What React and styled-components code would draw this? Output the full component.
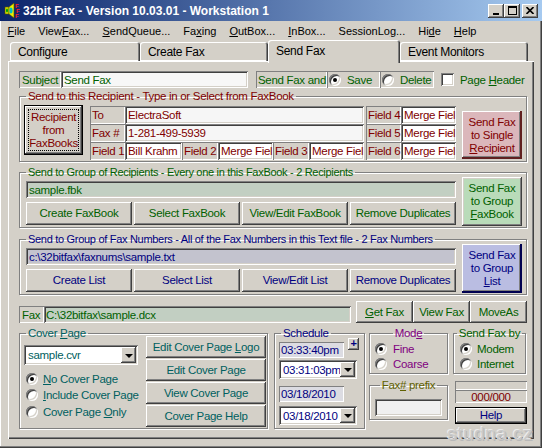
import React from 'react';
import styled, { createGlobalStyle } from 'styled-components';

const RAISED = 'inset -1px -1px #404040, inset 1px 1px #fff, inset -2px -2px #808080, inset 2px 2px #d4d0c8';
const SUNKEN = 'inset 1px 1px #808080, inset -1px -1px #fff, inset 2px 2px #404040, inset -2px -2px #d4d0c8';
const THIN = 'inset 1px 1px #808080, inset -1px -1px #fff';

const GREEN = '#006000';
const RED = '#800000';
const NAVY = '#000080';
const TEAL = '#006060';
const PURPLE = '#800080';
const OLIVE = '#606000';

const GlobalStyle = createGlobalStyle`
  html, body { margin: 0; padding: 0; background: #d4d0c8; overflow: hidden; }
  body {
    font-family: "Liberation Sans", Arial, sans-serif;
    font-size: 11.5px;
    letter-spacing: -0.3px;
  }
`;

const Window = styled.div`
  position: relative;
  width: 542px;
  height: 448px;
  box-sizing: border-box;
  background: #d4d0c8;
  box-shadow: inset -1px -1px #404040, inset -2px -2px #808080, inset 1px 0 #fff;
  overflow: hidden;
`;

const TitleBar = styled.div`
  height: 21px;
  display: flex;
  align-items: center;
  padding: 0 4px;
  background: linear-gradient(to right, #0a246a, #a6caf0);
`;

const TitleText = styled.div`
  flex: 1;
  margin-left: 2px;
  color: #fff;
  font-weight: bold;
  font-size: 12px;
  letter-spacing: 0;
`;

const CapBtn = styled.div`
  width: 16px;
  height: 14px;
  box-sizing: border-box;
  margin-left: ${p => p.$ml || 0}px;
  background: #d4d0c8;
  box-shadow: ${RAISED};
  display: flex;
  align-items: center;
  justify-content: center;
`;

const MenuBar = styled.div`
  height: 19px;
  display: flex;
  align-items: center;
  padding-left: 1px;
  font-size: 11px;
  letter-spacing: 0;
  color: #000;
`;

const MenuItem = styled.span`
  padding: 0 6.5px;
`;

const TabStrip = styled.div`
  height: 21px;
  display: flex;
  align-items: flex-end;
  padding-left: 10px;
  position: relative;
  z-index: 1;
`;

const Tab = styled.div`
  box-sizing: border-box;
  width: ${p => p.$w}px;
  height: ${p => (p.$active ? 23 : 19)}px;
  margin-bottom: ${p => (p.$active ? -2 : 0)}px;
  padding: ${p => (p.$active ? 4 : 3)}px 0 0 8px;
  border-radius: 3px 3px 0 0;
  background: #d4d0c8;
  box-shadow: ${p =>
    p.$active
      ? 'inset 1px 1px #fff, inset -1px 0 #404040, inset -2px 0 #808080'
      : 'inset 1px 1px #fff, inset -1px 0 #404040, inset -2px 0 #808080, inset 0 -1px #fff'};
  font-size: 12px;
  color: #000;
`;

const Panel = styled.div`
  box-sizing: border-box;
  margin-left: 8px;
  width: 526px;
  height: 378px;
  padding: 10px 7px 0 11px;
  box-shadow: inset 1px 1px #fff, inset -1px -1px #404040, inset -2px -2px #808080;
`;

const Row = styled.div`
  display: flex;
  align-items: ${p => p.$align || 'stretch'};
  height: ${p => (p.$h ? `${p.$h}px` : 'auto')};
  margin-top: ${p => p.$mt || 0}px;
  margin-left: ${p => p.$ml || 0}px;
  gap: ${p => p.$gap || 0}px;
`;

const Col = styled.div`
  display: flex;
  flex-direction: column;
  flex: none;
  width: ${p => (p.$w ? `${p.$w}px` : 'auto')};
  margin-top: ${p => p.$mt || 0}px;
  margin-left: ${p => p.$ml || 0}px;
  padding-left: ${p => p.$pl || 0}px;
  gap: ${p => p.$gap || 0}px;
`;

const Label = styled.div`
  box-sizing: border-box;
  flex: none;
  width: ${p => p.$w}px;
  height: ${p => p.$h || 18}px;
  margin-top: ${p => p.$mt || 0}px;
  margin-left: ${p => p.$ml || 0}px;
  padding-left: ${p => p.$pl ?? 3}px;
  display: flex;
  align-items: center;
  justify-content: ${p => (p.$center ? 'center' : 'flex-start')};
  background: ${p => p.$bg || 'transparent'};
  color: ${p => p.$c || 'inherit'};
  box-shadow: ${THIN};
  white-space: nowrap;
  overflow: hidden;
`;

const Field = styled.div`
  box-sizing: border-box;
  flex: none;
  width: ${p => p.$w}px;
  height: ${p => p.$h || 18}px;
  margin-top: ${p => p.$mt || 0}px;
  margin-left: ${p => p.$ml || 0}px;
  padding: 0 2px 0 ${p => p.$pl ?? 4}px;
  display: flex;
  align-items: center;
  background: ${p => p.$bg || '#fff'};
  box-shadow: ${SUNKEN};
  white-space: nowrap;
  overflow: hidden;
`;

const Button = styled.button`
  box-sizing: border-box;
  flex: none;
  width: ${p => p.$w}px;
  height: ${p => p.$h || 23}px;
  margin: ${p => p.$mt || 0}px 0 0 ${p => p.$ml || 0}px;
  padding: 0;
  border: none;
  font: inherit;
  letter-spacing: inherit;
  line-height: 13px;
  color: ${p => p.$c || 'inherit'};
  background: ${p => p.$bg || '#d4d0c8'};
  box-shadow: ${p =>
    p.$default
      ? 'inset 0 0 0 1px #000, inset -2px -2px #404040, inset 2px 2px #fff, inset -3px -3px #808080'
      : p.$dark
      ? `inset -1px -1px ${p.$dark}, inset -2px -2px ${p.$dark}, inset 1px 1px #fff, inset -3px -3px #808080`
      : RAISED};
  outline: ${p => (p.$focus ? '1px dotted #000' : 'none')};
  outline-offset: -5px;
`;

const Group = styled.fieldset`
  box-sizing: border-box;
  flex: none;
  width: ${p => p.$w}px;
  height: ${p => (p.$h ? `${p.$h}px` : 'auto')};
  min-width: 0;
  margin: ${p => p.$mt || 0}px 0 0 ${p => p.$ml || 0}px;
  padding: 0;
  border: 1px solid #808080;
  box-shadow: inset 1px 1px #fff, 1px 1px #fff;
  color: ${p => p.$c};
`;

const Legend = styled.legend`
  padding: 0 2px;
  margin: ${p => (p.$center ? '0 auto' : '0 0 0 6px')};
  line-height: 10px;
  font-size: ${p => p.$fs || 11}px;
  white-space: nowrap;
`;

const GroupBody = styled.div`
  display: flex;
  align-items: flex-start;
  padding: ${p => p.$pad || '0'};
`;

const RadioDot = styled.span`
  position: relative;
  box-sizing: border-box;
  flex: none;
  width: 12px;
  height: 12px;
  border-radius: 50%;
  background: #fff;
  box-shadow: ${SUNKEN};

  &::after {
    content: '';
    display: ${p => (p.$on ? 'block' : 'none')};
    position: absolute;
    left: 4px;
    top: 4px;
    width: 4px;
    height: 4px;
    border-radius: 50%;
    background: #000;
  }
`;

const Option = styled.div`
  display: flex;
  align-items: center;
  gap: ${p => p.$gap || 6}px;
  height: ${p => p.$h || 15}px;
  padding-left: ${p => p.$pl || 0}px;
  white-space: nowrap;
`;

const Check = styled.span`
  box-sizing: border-box;
  flex: none;
  width: 13px;
  height: 13px;
  background: #fff;
  box-shadow: ${SUNKEN};
`;

const Combo = styled.div`
  box-sizing: border-box;
  flex: none;
  display: flex;
  align-items: center;
  width: ${p => p.$w}px;
  height: ${p => p.$h || 19}px;
  margin-top: ${p => p.$mt || 0}px;
  padding: 2px;
  background: #fff;
  box-shadow: ${SUNKEN};
`;

const ComboText = styled.span`
  flex: 1;
  padding-left: 2px;
  white-space: nowrap;
  overflow: hidden;
`;

const DropBtn = styled.span`
  box-sizing: border-box;
  flex: none;
  width: 15px;
  height: 100%;
  background: #d4d0c8;
  box-shadow: ${RAISED};
  display: flex;
  align-items: center;
  justify-content: center;

  &::after {
    content: '';
    border-left: 4px solid transparent;
    border-right: 4px solid transparent;
    border-top: 4px solid #000;
    margin-top: 1px;
  }
`;

const PlusBtn = styled.div`
  box-sizing: border-box;
  width: 11px;
  height: 12px;
  margin-left: 4px;
  background: #d4d0c8;
  box-shadow: ${RAISED};
  color: ${NAVY};
  font-weight: bold;
  font-size: 11px;
  line-height: 11px;
  text-align: center;
`;

const Watermark = styled.div`
  position: absolute;
  right: 9px;
  bottom: 3px;
  font-size: 19px;
  letter-spacing: 0.5px;
  color: #cacaca;
  text-shadow: -1px -1px #ececec, 1px 1px #b8b8b8;
  pointer-events: none;
`;

const AppIcon = () => (
  <svg width="17" height="17" viewBox="0 0 17 17">
    <rect x="1" y="5" width="4" height="7" fill="#e0e000" stroke="#505000" strokeWidth="0.6" />
    <polygon points="5,5 10,1 10,16 5,12" fill="#f0f000" stroke="#505000" strokeWidth="0.6" />
    <ellipse cx="7" cy="8.5" rx="1.6" ry="3" fill="#00c0c0" />
    <ellipse cx="3" cy="8.5" rx="1" ry="2" fill="#00a000" />
    <text x="11" y="6" fontSize="6" fontWeight="bold" fill="#ff2020" fontFamily="Liberation Sans">F</text>
    <text x="12" y="11" fontSize="6" fontWeight="bold" fill="#ff2020" fontFamily="Liberation Sans">F</text>
    <text x="11" y="16" fontSize="6" fontWeight="bold" fill="#ff2020" fontFamily="Liberation Sans">F</text>
  </svg>
);

const MinGlyph = () => (
  <svg width="8" height="8" viewBox="0 0 8 8">
    <rect x="1" y="6" width="6" height="2" fill="#000" />
  </svg>
);

const MaxGlyph = () => (
  <svg width="9" height="9" viewBox="0 0 9 9">
    <rect x="0.5" y="0.5" width="8" height="8" fill="none" stroke="#000" />
    <rect x="0" y="0" width="9" height="2" fill="#000" />
  </svg>
);

const CloseGlyph = () => (
  <svg width="8" height="7" viewBox="0 0 8 7">
    <path d="M0.5 0 L7.5 7 M7.5 0 L0.5 7" stroke="#000" strokeWidth="1.6" />
  </svg>
);

const menus = [
  ['', 'F', 'ile'],
  ['View', 'F', 'ax...'],
  ['', 'S', 'endQueue...'],
  ['Fa', 'x', 'ing'],
  ['', 'O', 'utBox...'],
  ['', 'I', 'nBox...'],
  ['SessionLo', 'g', '...'],
  ['Hi', 'd', 'e'],
  ['', 'H', 'elp'],
];

const tabs = [
  ['Configure', 130],
  ['Create Fax', 128],
  ['Send Fax', 132, true],
  ['Event Monitors', 128],
];

// the merge fields are narrower than their text, as in the original form
const MERGE = 'Merge Fiel';

const App = () => (
  <Window>
    <GlobalStyle />
    <TitleBar>
      <AppIcon />
      <TitleText>32bit Fax - Version 10.03.01 - Workstation 1</TitleText>
      <CapBtn><MinGlyph /></CapBtn>
      <CapBtn><MaxGlyph /></CapBtn>
      <CapBtn $ml={2}><CloseGlyph /></CapBtn>
    </TitleBar>

    <MenuBar>
      {menus.map(([a, u, b]) => (
        <MenuItem key={a + u + b}>
          {a}<u>{u}</u>{b}
        </MenuItem>
      ))}
    </MenuBar>

    <TabStrip>
      {tabs.map(([t, w, active]) => (
        <Tab key={t} $w={w} $active={active}>{t}</Tab>
      ))}
    </TabStrip>

    <Panel>
      {/* subject line */}
      <Row $h={17} style={{ color: GREEN }}>
        <Label $w={42} $h={17}>Subject</Label>
        <Field $w={187} $h={17} $bg="#f7f7f7" $pl={3}>Send Fax</Field>
        <Label $w={71} $h={17} $ml={8} $pl={2}>Send Fax and</Label>
        <Label $w={53} $h={17} $pl={2}>
          <Option $h={17}><RadioDot $on /><span>Save</span></Option>
        </Label>
        <Label $w={54} $h={17} $pl={2}>
          <Option $h={17}><RadioDot /><span>Delete</span></Option>
        </Label>
        <Option $h={17} $pl={7}><Check /><span>Page <u>H</u>eader</span></Option>
      </Row>

      {/* single recipient */}
      <Group $w={508} $mt={3} $c={RED}>
        <Legend $fs={11.5}>Send to this Recipient - Type in or Select from FaxBook</Legend>
        <GroupBody $pad="4px 4px 1px 4px">
          <Button $w={59} $h={50} $default $focus>
            Recipient<br />from<br />FaxBooks
          </Button>
          <Col $ml={7} $mt={1}>
            <Row $h={18}>
              <Label $w={35} $pl={2}>To</Label>
              <Field $w={239} $bg="#f6f6f6" $pl={3}>ElectraSoft</Field>
              <Label $w={35} $ml={2} $pl={2}>Field 4</Label>
              <Field $w={55} $pl={3}>{MERGE}</Field>
            </Row>
            <Row $h={18}>
              <Label $w={35} $pl={2}>Fax #</Label>
              <Field $w={239} $bg="#f6f6f6" $pl={3}>1-281-499-5939</Field>
              <Label $w={35} $ml={2} $pl={2}>Field 5</Label>
              <Field $w={55} $pl={3}>{MERGE}</Field>
            </Row>
            <Row $h={18}>
              <Label $w={35} $pl={2}>Field 1</Label>
              <Field $w={57} $pl={3}>Bill Krahm</Field>
              <Label $w={36} $pl={2}>Field 2</Label>
              <Field $w={55} $pl={3}>{MERGE}</Field>
              <Label $w={36} $pl={2}>Field 3</Label>
              <Field $w={55} $pl={3}>{MERGE}</Field>
              <Label $w={35} $ml={2} $pl={2}>Field 6</Label>
              <Field $w={55} $pl={3}>{MERGE}</Field>
            </Row>
          </Col>
          <Button $w={60} $h={48} $ml={6} $mt={6} $bg="#dbb7bb" $dark="#602020">
            Send Fax<br />to Single<br /><u>R</u>ecipient
          </Button>
        </GroupBody>
      </Group>

      {/* faxbook group */}
      <Group $w={508} $mt={5} $c={GREEN}>
        <Legend>Send to Group of Recipients - Every one in this FaxBook - 2 Recipients</Legend>
        <GroupBody $pad="0 4px 1px 6px">
          <Col $mt={4} $w={430}>
            <Field $w={430} $h={17} $bg="#c2cfc2" $pl={3}>sample.fbk</Field>
            <Row $mt={4} $gap={2}>
              <Button $w={106}>Create FaxBook</Button>
              <Button $w={106}>Select FaxBook</Button>
              <Button $w={106}>View/Edit FaxBook</Button>
              <Button $w={106}>Remove Duplicates</Button>
            </Row>
          </Col>
          <Button $w={60} $h={49} $ml={6} $bg="#b9dbb9">
            Send Fax<br />to Group<br /><u>F</u>axBook
          </Button>
        </GroupBody>
      </Group>

      {/* fax number list group */}
      <Group $w={508} $mt={6} $c={NAVY}>
        <Legend>Send to Group of Fax Numbers - All of the Fax Numbers in this Text file - 2 Fax Numbers</Legend>
        <GroupBody $pad="0 4px 1px 6px">
          <Col $mt={4} $w={430}>
            <Field $w={430} $h={17} $bg="#c3c3ce" $pl={3}>c:\32bitfax\faxnums\sample.txt</Field>
            <Row $mt={4} $gap={2}>
              <Button $w={106}>Create List</Button>
              <Button $w={106}>Select List</Button>
              <Button $w={106}>View/Edit List</Button>
              <Button $w={106}>Remove Duplicates</Button>
            </Row>
          </Col>
          <Button $w={60} $h={49} $ml={6} $bg="#babde2" $dark="#000050">
            Send Fax<br />to Group<br /><u>L</u>ist
          </Button>
        </GroupBody>
      </Group>

      {/* fax file */}
      <Row $h={22} $mt={6} $align="flex-end" style={{ color: GREEN }}>
        <Label $w={25} $h={17}>Fax</Label>
        <Field $w={307} $h={17} $bg="#c2cfc2" $pl={2}>C:\32bitfax\sample.dcx</Field>
        <Button $w={57} $h={22} $ml={5}><u>G</u>et Fax</Button>
        <Button $w={57} $h={22}>View Fax</Button>
        <Button $w={57} $h={22}>MoveAs</Button>
      </Row>

      {/* bottom options */}
      <Row $mt={5} $align="flex-start">
        <Group $w={249} $h={101} $c={TEAL}>
          <Legend $fs={11.5}>Cover <u>P</u>age</Legend>
          <GroupBody $pad="0 1px 0 4px">
            <Col $w={114}>
              <Combo $w={114} $h={20} $mt={7}>
                <ComboText>sample.cvr</ComboText>
                <DropBtn />
              </Combo>
              <Col $mt={5}>
                <Option $h={17} $pl={2} $gap={5}><RadioDot $on /><span><u>N</u>o Cover Page</span></Option>
                <Option $h={16} $pl={2} $gap={5}><RadioDot /><span><u>I</u>nclude Cover Page</span></Option>
                <Option $h={17} $pl={2} $gap={5}><RadioDot /><span>Cover Page <u>O</u>nly</span></Option>
              </Col>
            </Col>
            <Col $ml={8} $mt={-2} $gap={1}>
              <Button $w={120} $h={22}>Edit Cover Page <u>L</u>ogo</Button>
              <Button $w={120} $h={22}>Edit Cover Page</Button>
              <Button $w={120} $h={22}>View Cover Page</Button>
              <Button $w={120} $h={22}>Cover Page Help</Button>
            </Col>
          </GroupBody>
        </Group>

        <Group $w={91} $h={101} $ml={6} $c={NAVY}>
          <Legend $fs={11.5}>Schedule</Legend>
          <GroupBody $pad="0 0 0 4px">
            <Col>
              <Row $align="flex-start">
                <Label $w={65} $h={16} $mt={4} $pl={2} $bg="#dcdce2">03:33:40pm</Label>
                <PlusBtn>+</PlusBtn>
              </Row>
              <Combo $w={78} $mt={2}>
                <ComboText>03:31:03pm</ComboText>
                <DropBtn />
              </Combo>
              <Label $w={65} $h={16} $mt={7} $pl={2} $bg="#dcdce2">03/18/2010</Label>
              <Combo $w={78} $mt={4}>
                <ComboText>03/18/2010</ComboText>
                <DropBtn />
              </Combo>
            </Col>
          </GroupBody>
        </Group>

        <Col $w={79} $ml={4}>
          <Group $w={79} $h={46} $c={PURPLE}>
            <Legend $center $fs={11.5}>Mod<u>e</u></Legend>
            <Col $mt={3} $pl={5}>
              <Option><RadioDot $on /><span>Fine</span></Option>
              <Option><RadioDot /><span>Coarse</span></Option>
            </Col>
          </Group>
          <Group $w={79} $h={40} $mt={6} $c={OLIVE}>
            <Legend $center $fs={11.5}>Fax<u>#</u> prefix</Legend>
            <Field $w={67} $h={17} $mt={9} $ml={5} $bg="#f0f0f0" />
          </Group>
        </Col>

        <Col $w={74} $ml={5}>
          <Group $w={73} $h={46} $c={GREEN}>
            <Legend $center $fs={11.5}>Send Fax by</Legend>
            <Col $mt={3} $pl={6}>
              <Option $gap={5}><RadioDot $on /><span>Modem</span></Option>
              <Option $gap={5}><RadioDot /><span>Internet</span></Option>
            </Col>
          </Group>
          <Label $w={72} $h={9} $mt={7} $ml={2} />
          <Label $w={72} $h={13} $ml={2} $pl={0} $center $c={RED}>000/000</Label>
          <Button $w={72} $h={17} $ml={2} $mt={4} $c={NAVY} $default>Help</Button>
        </Col>
      </Row>
    </Panel>

    <Watermark>studna.cz</Watermark>
  </Window>
);

export default App;
